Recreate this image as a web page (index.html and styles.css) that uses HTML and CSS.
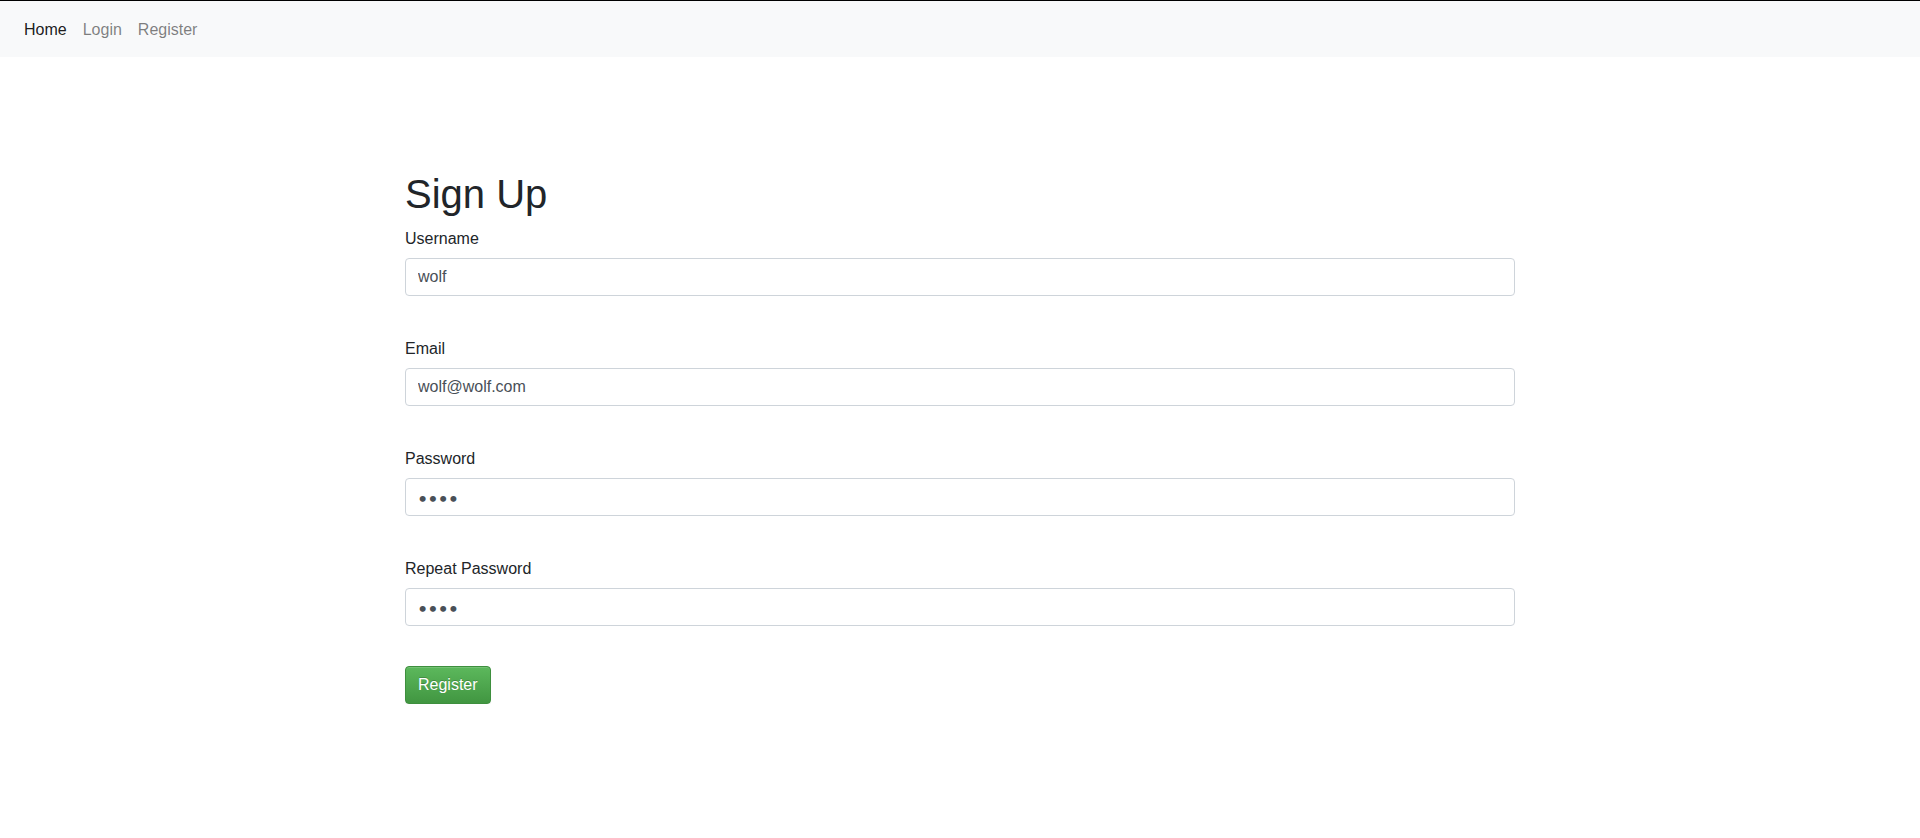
FILE: index.html
```html
<!DOCTYPE html>
<html lang="en">
<head>
  <meta charset="UTF-8">
  <meta name="viewport" content="width=device-width, initial-scale=1.0">
  <title>Sign Up</title>
  <link rel="stylesheet" href="styles.css">
</head>
<body>
  <nav class="navbar">
    <a href="#" class="nav-link active">Home</a>
    <a href="#" class="nav-link">Login</a>
    <a href="#" class="nav-link">Register</a>
  </nav>
  <div class="container">
    <h1 class="title">Sign Up</h1>
    <form class="signup-form">
      <div class="form-group">
        <label for="username">Username</label>
        <input type="text" id="username" class="form-control" value="wolf">
      </div>
      <div class="form-group">
        <label for="email">Email</label>
        <input type="email" id="email" class="form-control" value="wolf@wolf.com">
      </div>
      <div class="form-group">
        <label for="password">Password</label>
        <input type="password" id="password" class="form-control" value="wolf">
      </div>
      <div class="form-group">
        <label for="password2">Repeat Password</label>
        <input type="password" id="password2" class="form-control" value="wolf">
      </div>
      <button type="submit" class="btn-success">Register</button>
    </form>
  </div>
</body>
</html>
```

FILE: styles.css
```css
body {
  margin: 0;
  border-top: 1px solid black;
  font-family: "Liberation Sans", Arial, sans-serif;
  font-size: 16px;
  line-height: 1.5;
  color: #212529;
  background: white;
}

.navbar {
  display: flex;
  align-items: center;
  padding: 8px 16px;
  background-color: #f8f9fa;
}
.nav-link {
  display: block;
  padding: 9px 8px 7px;
  color: rgba(0, 0, 0, 0.5);
  text-decoration: none;
}
.nav-link.active {
  color: rgba(0, 0, 0, 0.9);
}
.nav-link:hover {
  color: rgba(0, 0, 0, 0.7);
}

.container {
  max-width: 1110px;
  margin: 0 auto;
  padding: 113px 15px 0;
}

.title {
  margin: 0 0 8px;
  font-size: 40px;
  font-weight: 500;
  line-height: 1.2;
}

.form-group {
  margin-bottom: 40px;
}
.form-group label {
  display: block;
  padding-top: 1px;
  margin-bottom: 7px;
}
.form-control {
  display: block;
  box-sizing: border-box;
  width: 100%;
  height: 38px;
  padding: 6px 12px;
  font-family: inherit;
  font-size: 16px;
  line-height: 1.5;
  color: #495057;
  background-color: white;
  border: 1px solid #ced4da;
  border-radius: 4px;
}
.form-control[type="password"] {
  font-family: Lato, sans-serif;
  letter-spacing: 1px;
}

.btn-success {
  padding: 6px 12px;
  font-family: inherit;
  font-size: 16px;
  line-height: 1.5;
  color: white;
  background-color: #5cb85c;
  background-image: linear-gradient(to bottom, #5cb85c 0, #419641 100%);
  border: 1px solid #3e8f3e;
  border-radius: 4px;
  text-shadow: 0 -1px 0 rgba(0, 0, 0, 0.2);
  box-shadow: inset 0 1px 0 rgba(255, 255, 255, 0.15), 0 1px 1px rgba(0, 0, 0, 0.075);
  cursor: pointer;
}
```
